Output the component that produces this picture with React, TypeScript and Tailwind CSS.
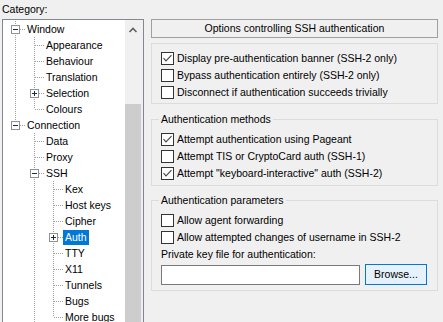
import React from "react";

type Row = { t: string; l: number; anc: boolean[]; last: boolean; box?: "+" | "-"; sel?: boolean };

const rows: Row[] = [
  { t: "Window", l: 0, anc: [], last: false, box: "-" },
  { t: "Appearance", l: 1, anc: [true], last: false },
  { t: "Behaviour", l: 1, anc: [true], last: false },
  { t: "Translation", l: 1, anc: [true], last: false },
  { t: "Selection", l: 1, anc: [true], last: false, box: "+" },
  { t: "Colours", l: 1, anc: [true], last: true },
  { t: "Connection", l: 0, anc: [], last: true, box: "-" },
  { t: "Data", l: 1, anc: [false], last: false },
  { t: "Proxy", l: 1, anc: [false], last: false },
  { t: "SSH", l: 1, anc: [false], last: false, box: "-" },
  { t: "Kex", l: 2, anc: [false, true], last: false },
  { t: "Host keys", l: 2, anc: [false, true], last: false },
  { t: "Cipher", l: 2, anc: [false, true], last: false },
  { t: "Auth", l: 2, anc: [false, true], last: false, box: "+", sel: true },
  { t: "TTY", l: 2, anc: [false, true], last: false },
  { t: "X11", l: 2, anc: [false, true], last: false },
  { t: "Tunnels", l: 2, anc: [false, true], last: false },
  { t: "Bugs", l: 2, anc: [false, true], last: false },
  { t: "More bugs", l: 2, anc: [false, true], last: true },
];

const DOT = "#a0a0a0";

function AncCell({ on }: { on: boolean }) {
  return (
    <svg width="19" height="16" className="shrink-0 block" shapeRendering="crispEdges">
      {on && <line x1="9.5" y1="0" x2="9.5" y2="16" stroke={DOT} strokeDasharray="1 1" />}
    </svg>
  );
}

function OwnCell({ last, box }: { last: boolean; box?: "+" | "-" }) {
  return (
    <svg width="19" height="16" className="shrink-0 block" shapeRendering="crispEdges">
      <line x1="9.5" y1="0" x2="9.5" y2="8" stroke={DOT} strokeDasharray="1 1" />
      {!last && <line x1="9.5" y1="8" x2="9.5" y2="16" stroke={DOT} strokeDasharray="1 1" />}
      <line x1="10" y1="8.5" x2="19" y2="8.5" stroke={DOT} strokeDasharray="1 1" />
      {box && (
        <g>
          <rect x="5.5" y="4.5" width="8" height="8" fill="#fff" stroke="#919191" />
          <line x1="7" y1="8.5" x2="12" y2="8.5" stroke="#1c2a52" />
          {box === "+" && <line x1="9.5" y1="6" x2="9.5" y2="11" stroke="#1c2a52" />}
        </g>
      )}
    </svg>
  );
}

function Check({ checked, label }: { checked?: boolean; label: string }) {
  return (
    <div className="h-[17px] flex items-center">
      <div className="w-[13px] h-[13px] border border-[#333333] bg-white shrink-0 relative">
        {checked && (
          <svg width="11" height="11" viewBox="0 0 11 11" className="block">
            <path d="M1.5 5.2 L4 7.8 L9.5 2.2" fill="none" stroke="#4a4a4a" strokeWidth="1.2" />
          </svg>
        )}
      </div>
      <span className="ml-[3px] whitespace-nowrap">{label}</span>
    </div>
  );
}

export default function App() {
  return (
    <div className="w-[443px] h-[322px] bg-[#f0f0f0] overflow-hidden flex font-['Liberation_Sans',Arial,sans-serif] text-[10.5px] text-black">
      {/* Left column */}
      <div className="w-[151px] shrink-0 flex flex-col">
        <div className="h-[19px] leading-[19px] pl-[2px]">Category:</div>
        <div className="ml-[2px] w-[142px] h-[320px] shrink-0 border border-[#828790] bg-white flex overflow-hidden">
          <div className="w-[122px] shrink-0 pt-[1px] pl-[3px] flex flex-col">
            {rows.map((r, i) => (
              <div key={i} className="h-[16px] flex items-center shrink-0">
                {r.anc.map((a, j) => (
                  <AncCell key={j} on={a} />
                ))}
                <OwnCell last={r.last} box={r.box} />
                <span
                  className={
                    "h-[15px] leading-[15px] px-[2px] whitespace-nowrap " +
                    (r.sel ? "bg-[#0078d7] text-white" : "")
                  }
                >
                  {r.t}
                </span>
              </div>
            ))}
          </div>
          <div className="w-[18px] shrink-0 bg-[#f0f0f0] flex flex-col">
            <svg width="18" height="17" className="block shrink-0">
              <path d="M4.5 12 L8 8.5 L11.5 12" fill="none" stroke="#606060" strokeWidth="1.6" />
            </svg>
            <div className="mt-[67px] w-[16px] h-[260px] bg-[#cdcdcd]" />
          </div>
        </div>
      </div>

      {/* Right column */}
      <div className="w-[287px] shrink-0 pt-[19px] flex flex-col">
        <div className="h-[19px] border border-[#a0a0a0] flex items-center justify-center whitespace-nowrap">
          Options controlling SSH authentication
        </div>

        <fieldset className="mt-[5px] border border-[#dcdcdc] pl-[9px] pr-[10px] pt-[6px] pb-[2px]">
          <Check checked label="Display pre-authentication banner (SSH-2 only)" />
          <Check label="Bypass authentication entirely (SSH-2 only)" />
          <Check label="Disconnect if authentication succeeds trivially" />
        </fieldset>

        <fieldset className="mt-[7px] border border-[#dcdcdc] pl-[9px] pr-[10px] pt-[4px] pb-[3px]">
          <legend className="leading-[16px] px-[2px] ml-[-2px]">Authentication methods</legend>
          <Check checked label="Attempt authentication using Pageant" />
          <Check label="Attempt TIS or CryptoCard auth (SSH-1)" />
          <Check checked label={'Attempt "keyboard-interactive" auth (SSH-2)'} />
        </fieldset>

        <fieldset className="mt-[6px] border border-[#dcdcdc] pl-[9px] pr-[10px] pt-[4px] pb-[5px]">
          <legend className="leading-[16px] px-[2px] ml-[-2px]">Authentication parameters</legend>
          <Check label="Allow agent forwarding" />
          <Check label="Allow attempted changes of username in SSH-2" />
          <div className="h-[16px] leading-[16px] whitespace-nowrap">Private key file for authentication:</div>
          <div className="mt-[2px] h-[21px] flex items-start">
            <div className="mt-[1px] w-[199px] h-[20px] border border-[#7a7a7a] bg-white" />
            <div className="ml-[5px] w-[62px] h-[21px] border border-[#0078d7] bg-[#e5f1fb] flex items-center justify-center">
              Browse...
            </div>
          </div>
        </fieldset>
      </div>
    </div>
  );
}
